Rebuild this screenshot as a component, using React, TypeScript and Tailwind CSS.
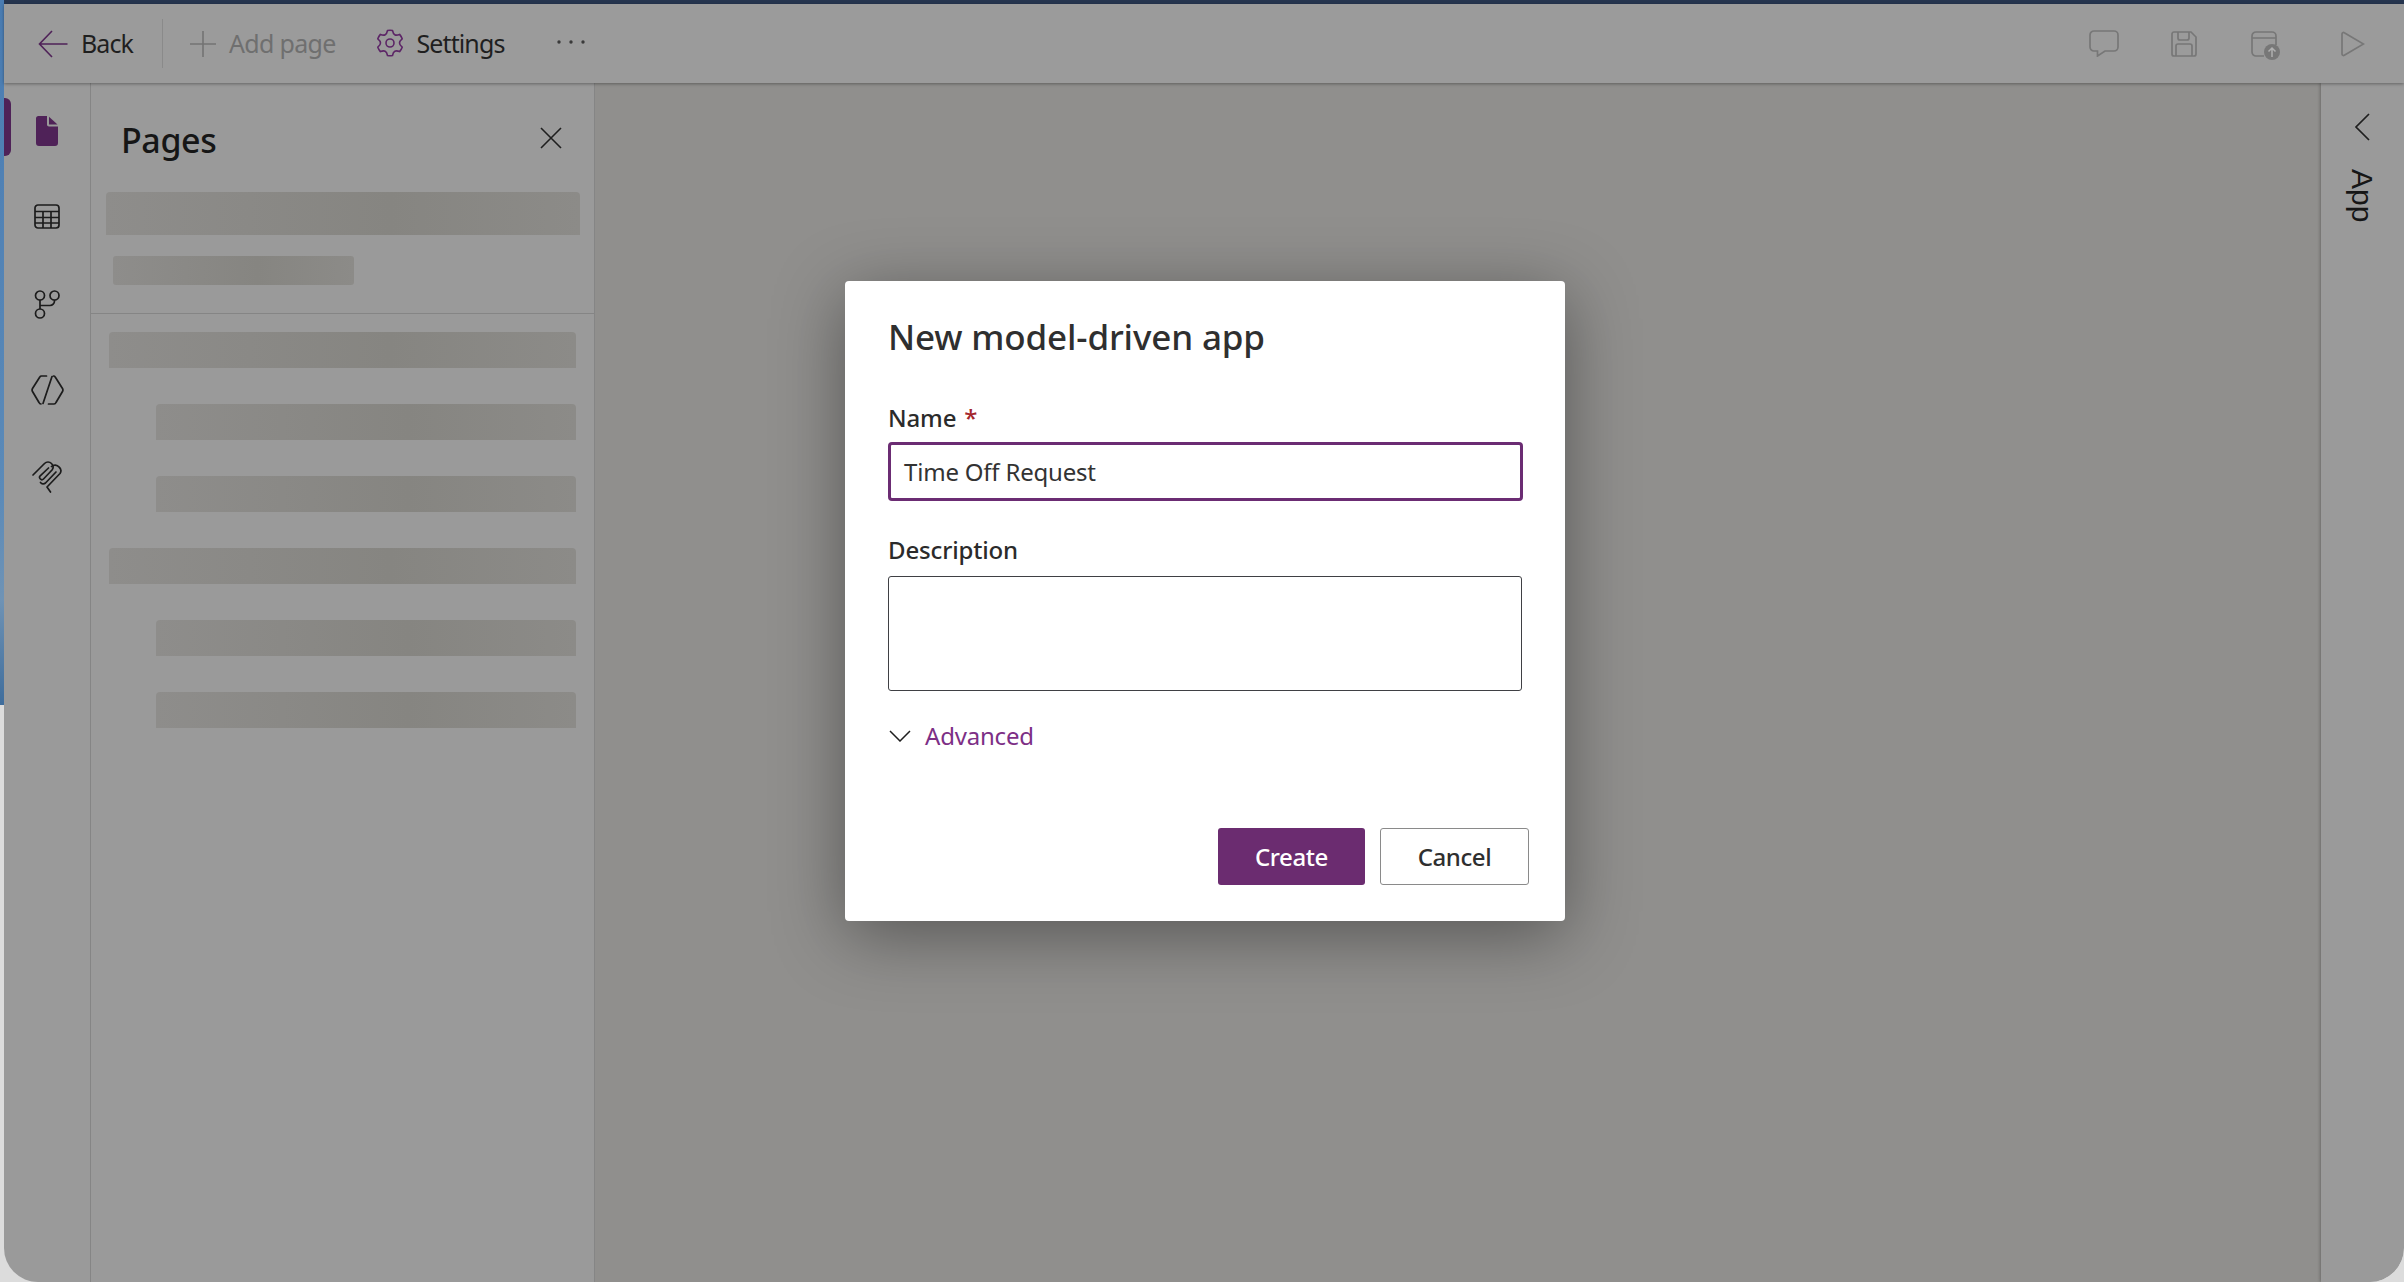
const font = "font-['Noto_Sans',sans-serif]";

const skeletonRows = [
  { id: 1, child: false },
  { id: 2, child: true },
  { id: 3, child: true },
  { id: 4, child: false },
  { id: 5, child: true },
  { id: 6, child: true },
];

const skeletonBg = 'bg-[linear-gradient(90deg,#8e8d8b,#868581_60%,#8c8b88)]';

function BackIcon() {
  return (
    <svg width="30" height="28" viewBox="0 0 30 28" fill="none" stroke="#4f2258" strokeWidth="1.6">
      <path d="M14 1 1.500 14 14 27M1.500 14H29.500" />
    </svg>
  );
}

function PlusIcon() {
  return (
    <svg width="28" height="28" viewBox="0 0 28 28" fill="none" stroke="#747474" strokeWidth="1.6">
      <path d="M14 1v26M1 14h26" />
    </svg>
  );
}

// six rounded teeth, same shape as the fluent settings icon
function GearIcon() {
  return (
    <svg width="30" height="30" viewBox="0 0 30 30" fill="none" stroke="#5c2566" strokeWidth="1.600" strokeLinejoin="round">
      <path d="M12.500 1.500a12 12 0 0 1 5 0c.5 2.500 1 3.500 2.300 4.200 1.300.8 2.500.6 4.800-.3a14 14 0 0 1 2.600 4.400c-1.900 1.500-2.700 2.500-2.700 4.200 0 1.700.8 2.700 2.700 4.200a14 14 0 0 1-2.600 4.400c-2.300-.9-3.500-1.100-4.800-.3-1.300.7-1.800 1.700-2.300 4.200a12 12 0 0 1-5 0c-.5-2.500-1-3.500-2.300-4.200-1.300-.8-2.500-.6-4.800.3a14 14 0 0 1-2.600-4.400c1.900-1.500 2.700-2.500 2.700-4.200 0-1.700-.8-2.700-2.700-4.200a14 14 0 0 1 2.600-4.400c2.300.9 3.500 1.100 4.800.3 1.300-.7 1.800-1.700 2.300-4.200Z" />
      <circle cx="15" cy="14" r="4" />
    </svg>
  );
}

function PageIcon() {
  return (
    <svg width="22" height="30" viewBox="0 0 22 30" fill="#4f2258">
      <path d="M2.500 0H11v8.500c0 1.200.8 2 2 2h9V27a3 3 0 0 1-3 3H3a3 3 0 0 1-3-3V2.500A2.500 2.500 0 0 1 2.500 0Z" />
      <path d="M13 .8V8.500h8.500Z" />
    </svg>
  );
}

function TableIcon() {
  return (
    <svg width="26" height="25" viewBox="0 0 26 25" fill="none" stroke="#1c1c1c" strokeWidth="1.7">
      <rect x="1" y="1" width="24" height="23" rx="3" />
      <path d="M1 7.500h24M1 13.500h24M1 19h24M9 7.500V24M17 7.500V24" />
    </svg>
  );
}

function BranchIcon() {
  return (
    <svg width="26" height="29" viewBox="0 0 26 29" fill="none" stroke="#1c1c1c" strokeWidth="1.7">
      <circle cx="6" cy="5.500" r="4.500" />
      <circle cx="20.500" cy="5.500" r="4.500" />
      <circle cx="6" cy="23.500" r="4.500" />
      <path d="M6 10v9M6 15.500h10a4.500 4.500 0 0 0 4.500-4.500v-1" />
    </svg>
  );
}

function CodeIcon() {
  return (
    <svg width="33" height="30" viewBox="0 0 33 30" fill="none" stroke="#1c1c1c" strokeWidth="1.7" strokeLinecap="round">
      <path d="M15.500 1H10.500a2 2 0 0 0-1.700 1L1.500 13.500a3 3 0 0 0 0 3L8 27.500A2.500 2.500 0 0 0 10 29M22.500 1a2 2 0 0 1 1.700 1l7.300 11.500a3 3 0 0 1 0 3L25 27.500a2.500 2.500 0 0 1-2 1.500h-5.500M21 1.500 12 28.500" />
    </svg>
  );
}

function ClipIcon() {
  return (
    <svg width="30" height="33" viewBox="0 0 30 33" fill="none" stroke="#1c1c1c" strokeWidth="1.7" strokeLinecap="round" strokeLinejoin="round">
      <path d="M1 15 12.500 3.500a5 5 0 0 1 7 0 5 5 0 0 1 .5 6.500l-8.500 9a2.300 2.300 0 0 1-3.300-3.200L16.500 8" />
      <path d="M19.500 6.500a5 5 0 0 1 7.500.5 5 5 0 0 1 1 6.500L15.500 26.500l-.5.5 3.500 5" />
      <path d="M24 12 13.500 23a3.500 3.500 0 0 1-5-.5" />
    </svg>
  );
}

function CloseIcon() {
  return (
    <svg width="22" height="22" viewBox="0 0 22 22" fill="none" stroke="#1f1f1f" strokeWidth="1.6">
      <path d="M1 1l20 20M21 1 1 21" />
    </svg>
  );
}

function CommentIcon() {
  return (
    <svg width="30" height="27" viewBox="0 0 30 27" fill="none" stroke="#777" strokeWidth="1.700">
      <path d="M5 1h20a4 4 0 0 1 4 4v12a4 4 0 0 1-4 4H16l-7.500 5v-5H5a4 4 0 0 1-4-4V5a4 4 0 0 1 4-4Z" />
    </svg>
  );
}

function SaveIcon() {
  return (
    <svg width="26" height="26" viewBox="0 0 26 26" fill="none" stroke="#777" strokeWidth="1.700">
      <path d="M3 1h17l5 5v17a2 2 0 0 1-2 2H3a2 2 0 0 1-2-2V3a2 2 0 0 1 2-2Z" />
      <path d="M7 1v6a2 2 0 0 0 2 2h7a2 2 0 0 0 2-2V1M5 25V15a2 2 0 0 1 2-2h12a2 2 0 0 1 2 2v10" />
    </svg>
  );
}

function PublishIcon() {
  return (
    <svg width="29" height="29" viewBox="0 0 29 29" fill="none" stroke="#777" strokeWidth="1.700">
      <path d="M13 25H5a4 4 0 0 1-4-4V5a4 4 0 0 1 4-4h16a4 4 0 0 1 4 4v9M1 7h24" />
      <circle cx="21" cy="21" r="8" fill="#777" stroke="none" />
      <path d="M21 26v-9M17.500 20.500 21 17l3.500 3.500" stroke="#b0b0b0" strokeWidth="1.500" />
    </svg>
  );
}

function PlayIcon() {
  return (
    <svg width="24" height="26" viewBox="0 0 24 26" fill="none" stroke="#777" strokeWidth="1.700">
      <path d="M1 3v20a1.500 1.500 0 0 0 2.300 1.300L22.500 13 3.300 1.700A1.500 1.500 0 0 0 1 3Z" />
    </svg>
  );
}

function DotsIcon() {
  return (
    <svg width="28" height="4" viewBox="0 0 28 4" fill="#3a3a3a">
      <circle cx="2" cy="2" r="1.700" />
      <circle cx="14" cy="2" r="1.700" />
      <circle cx="26" cy="2" r="1.700" />
    </svg>
  );
}

function Toolbar() {
  return (
    <header className="relative z-10 flex h-[79px] shrink-0 items-center justify-between bg-[#9b9b9b] pl-[34px] pr-[39px] shadow-[0_1px_3px_rgba(0,0,0,0.35)]">
      <div className="flex items-center">
        <div className="flex items-center gap-[13px]">
          <BackIcon />
          <span className="text-[25px] tracking-[-0.9px] text-[#1f1f1f]">Back</span>
        </div>
        <div className="ml-[29px] h-[49px] w-px bg-[#8a8a8a]" />
        <div className="ml-[26px] flex items-center gap-[12px]">
          <PlusIcon />
          <span className="text-[25px] tracking-[-0.7px] text-[#6f6f6f]">Add page</span>
        </div>
        <div className="ml-[39px] flex items-center gap-[12px]">
          <GearIcon />
          <span className="text-[25px] tracking-[-0.9px] text-[#1f1f1f]">Settings</span>
        </div>
        <div className="ml-[53px] mb-[3px]">
          <DotsIcon />
        </div>
      </div>
      <div className="flex items-center">
        <CommentIcon />
        <div className="ml-[52px]"><SaveIcon /></div>
        <div className="ml-[54px] mt-[3px]"><PublishIcon /></div>
        <div className="ml-[61px]"><PlayIcon /></div>
      </div>
    </header>
  );
}

function IconRail() {
  return (
    <aside className="relative flex w-[87px] shrink-0 flex-col items-center border-r border-r-[#858585] bg-[#9a9a9a] pt-[33px]">
      <div className="absolute left-0 top-[15px] h-[58px] w-[7px] rounded-r-[6px] bg-[#4f2258]" />
      <div className="flex h-[30px] items-center"><PageIcon /></div>
      <div className="mt-[58px] flex h-[25px] items-center"><TableIcon /></div>
      <div className="mt-[61px] flex h-[29px] items-center"><BranchIcon /></div>
      <div className="mt-[56px] flex h-[30px] items-center"><CodeIcon /></div>
      <div className="mt-[55px] flex h-[33px] items-center"><ClipIcon /></div>
    </aside>
  );
}

function PagesPanel() {
  return (
    <section className="flex w-[504px] shrink-0 flex-col border-r border-r-[#858585] bg-[#9a9a9a]">
      <div className="flex h-[109px] shrink-0 items-start justify-between pl-[30px] pr-[32px]">
        <h2 className="mt-[34px] text-[34px] leading-[46px] font-medium tracking-[-0.4px] text-[#161616]">Pages</h2>
        <div className="mt-[44px]"><CloseIcon /></div>
      </div>
      <div className="h-[122px] shrink-0 border-b border-b-[#858585] pl-[15px] pr-[14px]">
        <div className={`h-[43px] rounded-t-[4px] ${skeletonBg}`} />
        <div className={`ml-[7px] mt-[21px] h-[29px] w-[241px] rounded-[3px] ${skeletonBg}`} />
      </div>
      <div className="flex flex-col gap-[36px] pl-[18px] pr-[18px] pt-[18px]">
        {skeletonRows.map((row) => (
          <div key={row.id} className={row.child ? 'pl-[47px]' : ''}>
            <div className={`h-[36px] rounded-t-[4px] ${skeletonBg}`} />
          </div>
        ))}
      </div>
    </section>
  );
}

function Field({ label, required, children }: { label: string; required?: boolean; children: React.ReactNode }) {
  return (
    <div className="flex flex-col">
      <label className="text-[24px] leading-[33px] font-medium tracking-[-0.15px] text-[#2b2b2b]">
        {label}
        {required && <span className="ml-[8px] text-[#a4262c]">*</span>}
      </label>
      {children}
    </div>
  );
}

function NewAppDialog() {
  return (
    <div className="absolute left-[845px] top-[281px] flex h-[640px] w-[720px] flex-col rounded-[4px] bg-white pl-[43px] pr-[36px] pt-[33px] shadow-[0_14px_70px_rgba(0,0,0,0.4)]">
      <h1 className="text-[35px] leading-[46px] font-medium tracking-[-0.15px] text-[#2f2f2f]">New model-driven app</h1>
      <div className="mt-[41px]">
        <Field label="Name" required>
          <div className="mt-[8px] flex h-[59px] w-[635px] items-center rounded-[4px] border-[3px] border-[#6b2c73] pl-[13px] text-[24px] tracking-[-0.2px] text-[#333]">
            Time Off Request
          </div>
        </Field>
      </div>
      <div className="mt-[32px]">
        <Field label="Description">
          <div className="mt-[10px] h-[115px] w-[634px] rounded-[3px] border-[1.5px] border-[#3f4044]" />
        </Field>
      </div>
      <div className="mt-[28px] flex items-center gap-[14px]">
        <svg className="ml-[1px]" width="22" height="12" viewBox="0 0 22 12" fill="none" stroke="#1f1f1f" strokeWidth="1.5">
          <path d="M1 1l10 10L21 1" />
        </svg>
        <span className="text-[24px] leading-[33px] tracking-[-0.2px] text-[#7d2f86]">Advanced</span>
      </div>
      <div className="mt-[76px] flex justify-end gap-[15px]">
        <button className="h-[57px] w-[147px] rounded-[3px] bg-[#6b2c70] text-[24px] font-medium tracking-[-0.4px] text-white">Create</button>
        <button className="h-[57px] w-[149px] rounded-[3px] border-[1.5px] border-[#8a8a8a] bg-white text-[24px] font-medium tracking-[-0.4px] text-[#2f2f2f]">Cancel</button>
      </div>
    </div>
  );
}

export default function App() {
  return (
    <div className={`relative h-[1282px] w-[2404px] overflow-hidden bg-[#dcdcdc] ${font}`}>
      <div className="absolute left-0 top-0 h-[705px] w-[6px] bg-[linear-gradient(180deg,#4a7cb2,#5b8ab8_70%,#6f93b5_85%,#3f6d9c)]" />
      <div className="relative flex h-full flex-col overflow-hidden rounded-b-[34px] pl-[4px]">
        <div className="h-[4px] shrink-0 bg-[#26354f]" />
        <Toolbar />
        <main className="flex min-h-0 flex-1 overflow-hidden rounded-b-[34px]">
          <IconRail />
          <PagesPanel />
          <div className="flex-1 bg-[#908f8d]" />
          <aside className="relative w-[83px] shrink-0 bg-[#9a9a9a] shadow-[-1px_0_3px_rgba(0,0,0,0.25)]">
            <div className="absolute left-[33px] top-[30px]">
              <svg width="16" height="28" viewBox="0 0 16 28" fill="none" stroke="#1f1f1f" strokeWidth="1.700">
                <path d="M15 1 2 14l13 13" />
              </svg>
            </div>
            <span className="absolute left-[23px] top-[86px] font-['Liberation_Sans',sans-serif] text-[30px] leading-[36px] text-[#161616] [writing-mode:vertical-rl]">App</span>
          </aside>
        </main>
      </div>
      <NewAppDialog />
    </div>
  );
}
